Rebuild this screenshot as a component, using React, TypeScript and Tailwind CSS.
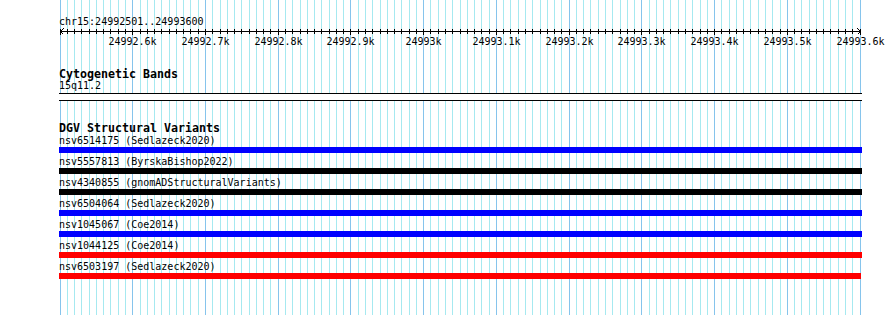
import React from "react";

const START = 24992500;
const PX_PER_BP = 800 / 1100;
const xOf = (i: number) => Math.round(59.5 + i * 10 * PX_PER_BP) + 0.5;

const gridIdx = Array.from({ length: 111 }, (_, i) => i);

const labels = [
  "24992.6k",
  "24992.7k",
  "24992.8k",
  "24992.9k",
  "24993k",
  "24993.1k",
  "24993.2k",
  "24993.3k",
  "24993.4k",
  "24993.5k",
  "24993.6k",
];

type Feat = { name: string; color: string; w: string };
const feats: Feat[] = [
  { name: "nsv6514175 (Sedlazeck2020)", color: "bg-[#0000ff]", w: "w-[803px]" },
  { name: "nsv5557813 (ByrskaBishop2022)", color: "bg-[#000000]", w: "w-[803px]" },
  { name: "nsv4340855 (gnomADStructuralVariants)", color: "bg-[#000000]", w: "w-[803px]" },
  { name: "nsv6504064 (Sedlazeck2020)", color: "bg-[#0000ff]", w: "w-[803px]" },
  { name: "nsv1045067 (Coe2014)", color: "bg-[#0000ff]", w: "w-[803px]" },
  { name: "nsv1044125 (Coe2014)", color: "bg-[#ff0000]", w: "w-[803px]" },
  { name: "nsv6503197 (Sedlazeck2020)", color: "bg-[#ff0000]", w: "w-[802px]" },
];

function Grid() {
  return (
    <svg
      className="absolute inset-0"
      width={890}
      height={315}
      shapeRendering="crispEdges"
    >
      {gridIdx.map((i) => (
        <line
          key={i}
          x1={xOf(i)}
          x2={xOf(i)}
          y1={0}
          y2={315}
          stroke={i % 10 === 0 ? "#86c4ec" : "#a6e9f0"}
          strokeWidth={1}
        />
      ))}
    </svg>
  );
}

function Ruler() {
  return (
    <svg width={890} height={20} className="block" shapeRendering="crispEdges">
      <line x1={60} x2={861} y1={3.5} y2={3.5} stroke="#000" strokeWidth={1} />
      {gridIdx.map((i) => (
        <line
          key={i}
          x1={xOf(i)}
          x2={xOf(i)}
          y1={1}
          y2={i % 10 === 0 ? 7 : 6}
          stroke="#000"
          strokeWidth={1}
        />
      ))}
      <polyline points="63.5,0.5 60.5,3.5 63.5,6.5" fill="none" stroke="#000" strokeWidth={1} />
      <polyline points="857.5,0.5 860.5,3.5 857.5,6.5" fill="none" stroke="#000" strokeWidth={1} />
      {labels.map((l, k) => (
        <text
          key={l}
          x={xOf((k + 1) * 10)}
          y={17}
          textAnchor="middle"
          fontFamily="'DejaVu Sans Mono', monospace"
          fontSize={10}
          fill="#000"
        >
          {l}
        </text>
      ))}
    </svg>
  );
}

export default function App() {
  return (
    <div className="relative w-[890px] h-[315px] bg-white overflow-hidden font-['DejaVu_Sans_Mono',monospace] text-black">
      <Grid />
      <div className="relative flex flex-col">
        <div className="pl-[59px] pt-[16px] text-[10px] leading-[12px]">
          chr15:24992501..24993600
        </div>
        <Ruler />
        <div className="pl-[59px] mt-[20px] text-[11.63px] leading-[12px] font-bold">
          Cytogenetic Bands
        </div>
        <div className="pl-[59px] text-[10px] leading-[12px]">15q11.2</div>
        <div className="ml-[59px] mt-[1px] w-[803px] h-[8px] bg-white border-y border-black" />
        <div className="pl-[59px] mt-[21px] text-[11.63px] leading-[12px] font-bold">
          DGV Structural Variants
        </div>
        <div className="flex flex-col mt-[1px] gap-[3px]">
          {feats.map((f) => (
            <div key={f.name} className="flex flex-col">
              <div className="pl-[59px] text-[10px] leading-[12px] whitespace-pre">
                {f.name}
              </div>
              <div className={`ml-[59px] h-[6px] ${f.w} ${f.color}`} />
            </div>
          ))}
        </div>
      </div>
    </div>
  );
}
